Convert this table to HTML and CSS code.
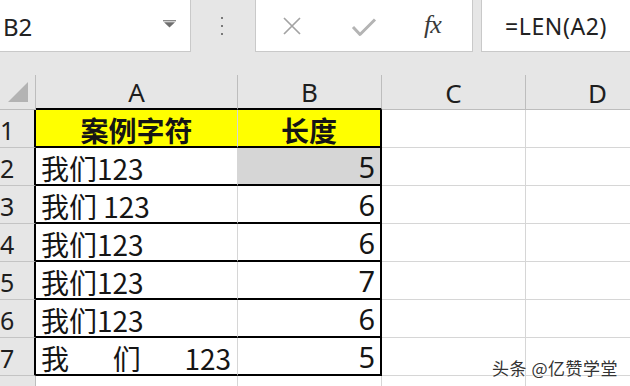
FILE: index.html
```html
<!DOCTYPE html>
<html lang="zh">
<head>
<meta charset="utf-8">
<link rel="stylesheet" href="styles.css">
</head>
<body>
<div class="app">
  <div class="topbar">
    <div class="namebox">
      <span class="name">B2</span>
      <svg class="dd" width="13" height="8" viewBox="0 0 13 8"><rect x="0" y="0" width="13" height="1.4" fill="#8a8a8a"/><path d="M1 2.2 H12 L6.5 7.5 Z" fill="#6e6e6e"/></svg>
    </div>
    <div class="dots"><i></i><i></i><i></i></div>
    <div class="btnbox">
      <svg class="ic-x" width="20" height="20" viewBox="0 0 20 20"><path d="M2 2 L18 18 M18 2 L2 18" stroke="#a3a3a3" stroke-width="1.7" fill="none"/></svg>
      <svg class="ic-ok" width="26" height="20" viewBox="0 0 26 20"><path d="M2 10 L9 17.5 L24 2.5" stroke="#b4b4b4" stroke-width="3" fill="none" stroke-linejoin="round"/></svg>
      <span class="fx">fx</span>
    </div>
    <div class="formula">=LEN(A2)</div>
  </div>
  <div class="sheet">
    <div class="corner"><svg width="20" height="20" viewBox="0 0 20 20"><path d="M20 0 V20 H0 Z" fill="#b3b3b3"/></svg></div>
    <div class="ch tb">A</div>
    <div class="ch tb">B</div>
    <div class="ch">C</div>
    <div class="ch">D</div>

    <div class="rh tbl">1</div>
    <div class="c t hd">案例字符</div>
    <div class="c t hd tr">长度</div>
    <div class="c"></div>
    <div class="c"></div>

    <div class="rh tbl">2</div>
    <div class="c t">我们123</div>
    <div class="c t num tr sel">5</div>
    <div class="c"></div>
    <div class="c"></div>

    <div class="rh tbl">3</div>
    <div class="c t">我们 123</div>
    <div class="c t num tr">6</div>
    <div class="c"></div>
    <div class="c"></div>

    <div class="rh tbl">4</div>
    <div class="c t">我们123</div>
    <div class="c t num tr">6</div>
    <div class="c"></div>
    <div class="c"></div>

    <div class="rh tbl">5</div>
    <div class="c t">我们123</div>
    <div class="c t num tr">7</div>
    <div class="c"></div>
    <div class="c"></div>

    <div class="rh tbl">6</div>
    <div class="c t">我们123</div>
    <div class="c t num tr">6</div>
    <div class="c"></div>
    <div class="c"></div>

    <div class="rh tbl">7</div>
    <div class="c t spread"><span>我</span><span>们</span><span>123</span></div>
    <div class="c t num tr">5</div>
    <div class="c"></div>
    <div class="c"></div>

    <div class="rh"></div>
    <div class="c"></div>
    <div class="c"></div>
    <div class="c"></div>
    <div class="c"></div>
  </div>
  <div class="wm">头条 @亿赞学堂</div>
</div>
</body>
</html>
```

FILE: styles.css
```css
html, body {
  margin: 0;
  padding: 0;
  background: #e6e6e6;
  overflow: hidden;
}
.app {
  width: 630px;
  height: 386px;
  overflow: hidden;
  position: relative;
  font-family: "Noto Sans CJK SC", "Noto Sans", sans-serif;
  color: #151515;
}
.topbar {
  display: flex;
  height: 52px;
  margin-bottom: 23px;
}
.namebox {
  width: 191px;
  background: #fff;
  border-right: 1px solid #c9c9c9;
  border-bottom: 1px solid #c9c9c9;
  box-sizing: border-box;
  display: flex;
  align-items: center;
  justify-content: space-between;
  padding: 0 14px 0 3px;
}
.name {
  font-family: "Noto Sans", sans-serif;
  font-size: 24px;
  color: #222;
  margin-top: 1px;
}
.dd { margin-top: -4px; }
.dots {
  width: 62px;
  display: flex;
  flex-direction: column;
  align-items: center;
  justify-content: center;
  gap: 6px;
  padding-right: 2px;
}
.dots i {
  display: block;
  width: 2px;
  height: 2px;
  border-radius: 1px;
  background: #555;
}
.btnbox {
  width: 218px;
  background: #fff;
  border-left: 1px solid #c9c9c9;
  border-right: 1px solid #c9c9c9;
  border-bottom: 1px solid #c9c9c9;
  box-sizing: border-box;
  display: flex;
  align-items: center;
  padding-left: 26px;
}
.ic-x { margin-right: 49px; }
.ic-ok { margin-right: 47px; margin-top: 2px; }
.fx {
  font-family: "Liberation Serif", serif;
  font-style: italic;
  font-size: 26px;
  color: #3a3a3a;
  letter-spacing: -1px;
  margin-top: -2px;
}
.formula {
  margin-left: 8px;
  flex: 1;
  background: #fff;
  border-left: 1px solid #c9c9c9;
  border-bottom: 1px solid #c9c9c9;
  font-family: "Noto Sans", sans-serif;
  font-size: 23px;
  letter-spacing: 0.6px;
  color: #222;
  display: flex;
  align-items: center;
  padding-left: 23px;
}
.sheet {
  display: grid;
  grid-template-columns: 36px 202px 144px 144px 144px;
  grid-template-rows: 35px repeat(8, 38px);
  background: #fff;
}
.corner {
  border-right: 1px solid #bdbdbd;
  border-bottom: 1px solid #bdbdbd;
  display: flex;
  align-items: flex-end;
  padding: 0 0 7px 8px;
  background: #e6e6e6;
}
.ch {
  background: #e6e6e6;
  border-right: 1px solid #bdbdbd;
  border-bottom: 1px solid #bdbdbd;
  display: flex;
  align-items: flex-end;
  justify-content: center;
  font-family: "Noto Sans", sans-serif;
  font-size: 26px;
  line-height: 1;
  padding-bottom: 3px;
  color: #1e1e1e;
}
.ch.tb { border-bottom: 2px solid #000; }
.rh {
  background: #e6e6e6;
  border-right: 1px solid #bdbdbd;
  border-bottom: 1px solid #c4c4c4;
  display: flex;
  align-items: flex-end;
  font-family: "Noto Sans", sans-serif;
  font-size: 25px;
  line-height: 1;
  padding: 0 0 4px 0;
  color: #1e1e1e;
}
.rh.tbl { border-right: 2px solid #000; }
.c {
  border-right: 1px solid #d6d6d6;
  border-bottom: 1px solid #d6d6d6;
  display: flex;
  align-items: flex-end;
  font-size: 28px;
  line-height: 1;
  padding: 0 5px 4px 5px;
  min-width: 0;
}
.c.t {
  border-bottom: 2px solid #000;
  padding-bottom: 2px;
}
.c.tr { border-right: 2px solid #000; }
.c.hd {
  background: #ffff00;
  font-weight: bold;
  font-size: 28px;
  justify-content: center;
}
.c.num {
  justify-content: flex-end;
  font-family: "Noto Sans", sans-serif;
  font-size: 29px;
  padding-bottom: 3px;
}
.c.sel { background: #d6d6d6; }
.c.spread { justify-content: space-between; padding-right: 6px; }
.wm {
  position: absolute;
  right: 12px;
  bottom: 6px;
  font-size: 17px;
  color: #333;
  text-shadow: 0 0 2px #fff, 0 0 2px #fff;
  letter-spacing: 0.5px;
}
```
